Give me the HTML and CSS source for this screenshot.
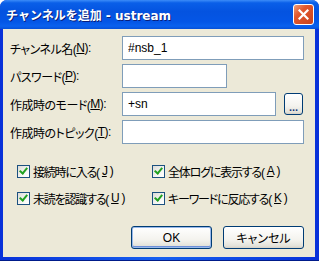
FILE: index.html
```html
<!DOCTYPE html>
<html lang="ja">
<head>
    <meta charset="UTF-8" />
    <title>チャンネルを追加 - ustream</title>
    <link rel="stylesheet" href="styles.css">
</head>
<body>
    <div class="window">
        <div class="titlebar">
            <span class="title">チャンネルを追加 - ustream</span>
            <button class="close" aria-label="閉じる">
                <svg width="11" height="11" viewBox="0 0 11 11">
                    <path d="M1.5 1.5 L9.5 9.5 M9.5 1.5 L1.5 9.5" stroke="#fff" stroke-width="2.2" stroke-linecap="square" />
                </svg>
            </button>
        </div>

        <main class="content">
            <div class="form">
                <label class="label">チャンネル名(<u>N</u>):</label>
                <div class="field"><input class="textbox" type="text" value="#nsb_1" /></div>

                <label class="label">パスワード(<u>P</u>):</label>
                <div class="field"><input class="textbox short" type="text" value="" /></div>

                <label class="label">作成時のモード(<u>M</u>):</label>
                <div class="field">
                    <input class="textbox" type="text" value="+sn" />
                    <button class="btn more">...</button>
                </div>

                <label class="label">作成時のトピック(<u>T</u>):</label>
                <div class="field"><input class="textbox" type="text" value="" /></div>
            </div>

            <div class="checks">
                <label class="check"><span class="box"></span>接続時に入る(<u>J</u>)</label>
                <label class="check"><span class="box"></span>全体ログに表示する(<u>A</u>)</label>
                <label class="check"><span class="box"></span>未読を認識する(<u>U</u>)</label>
                <label class="check"><span class="box"></span>キーワードに反応する(<u>K</u>)</label>
            </div>

            <div class="actions">
                <button class="btn default">OK</button>
                <button class="btn">キャンセル</button>
            </div>
        </main>
    </div>
</body>
</html>
```

FILE: styles.css
```css
body {
    margin: 0;
    padding: 0;
    background-color: #ffffff;
    font-family: "Liberation Sans", "Noto Sans CJK JP", sans-serif;
    font-size: 12px;
    font-feature-settings: "palt";
}

.window {
    width: 319px;
    height: 261px;
    box-sizing: border-box;
    padding: 0 4px 4px 3px;
    display: flex;
    flex-direction: column;
    border-radius: 7px 7px 0 0;
    background: linear-gradient(to right, #0831d9 0%, #1660f0 50%, #0831d9 100%);
    box-shadow: inset 0 -1px 0 #001b8a;
}

.titlebar {
    height: 29px;
    margin: 0 -4px 0 -3px;
    padding: 0 6px 0 6px;
    display: flex;
    align-items: center;
    justify-content: space-between;
    border-radius: 7px 7px 0 0;
    background: linear-gradient(to bottom,
        #3c8cf8 0%, #0a5fe8 10%, #0453e0 40%, #0456e6 75%, #0a61ee 90%, #0650d8 100%);
}

.title {
    color: #ffffff;
    font-family: "DejaVu Sans", "Noto Sans CJK JP", sans-serif;
    font-weight: bold;
    font-size: 12px;
    font-feature-settings: normal;
    text-shadow: 1px 1px 0 #0a1e7a;
    margin-top: -1px;
}

.close {
    width: 21px;
    height: 21px;
    padding: 0;
    margin-right: -1px;
    margin-top: -1px;
    border: 1px solid #ffffff;
    border-radius: 3px;
    background: linear-gradient(135deg, #f0a07a 0%, #e2582e 35%, #c9421c 100%);
    display: flex;
    align-items: center;
    justify-content: center;
}

.content {
    flex: 1;
    background-color: #ece9d8;
    padding: 7px 11px 0 7px;
}

.form {
    display: grid;
    grid-template-columns: 112px minmax(0, 1fr);
    grid-auto-rows: 24px;
    row-gap: 4px;
}

.label {
    display: flex;
    align-items: center;
    color: #000000;
    white-space: nowrap;
    letter-spacing: -0.5px;
}

.field {
    display: flex;
    align-items: center;
    gap: 8px;
    min-width: 0;
}

.textbox {
    flex: 1;
    height: 24px;
    box-sizing: border-box;
    width: 0;
    min-width: 0;
    margin: 0;
    padding: 0 5px;
    border: 1px solid #7f9db9;
    background-color: #ffffff;
    font-family: "Liberation Sans", "Noto Sans CJK JP", sans-serif;
    font-size: 12px;
    color: #000000;
}

.textbox.short {
    flex: none;
    width: 105px;
}

.btn {
    box-sizing: border-box;
    padding: 0;
    border: 1px solid #003c74;
    border-radius: 3px;
    background: linear-gradient(to bottom, #ffffff 0%, #f4f3ee 60%, #e3e2da 90%, #d6d0c5 100%);
    font-family: "Liberation Sans", "Noto Sans CJK JP", sans-serif;
    font-size: 12px;
    font-feature-settings: "palt";
    color: #000000;
}

.more {
    flex: none;
    width: 19px;
    height: 22px;
    margin-right: 1px;
    padding-top: 5px;
    line-height: 12px;
    font-weight: bold;
    font-size: 11px;
    color: #1a3a7a;
}

.checks {
    margin-top: 17px;
    padding-left: 7px;
    display: grid;
    grid-template-columns: 135px 1fr;
    grid-auto-rows: 20px;
    row-gap: 7px;
}

.check {
    display: flex;
    align-items: center;
    gap: 3px;
    white-space: nowrap;
    color: #000000;
    letter-spacing: -1.2px;
}

.box {
    flex: none;
    width: 13px;
    height: 13px;
    box-sizing: border-box;
    border: 1px solid #1c5180;
    background: linear-gradient(135deg, #dcdcd6 0%, #f6f6f4 60%, #ffffff 100%);
    position: relative;
}

.box::after {
    content: "";
    position: absolute;
    left: 3px;
    top: 0px;
    width: 3px;
    height: 6px;
    border-right: 2px solid #21a121;
    border-bottom: 2px solid #21a121;
    transform: rotate(40deg);
}

.actions {
    margin-top: 18px;
    display: flex;
    justify-content: flex-end;
    gap: 11px;
}

.actions .btn {
    width: 81px;
    height: 23px;
}

.btn.default {
    box-shadow: inset 0 0 0 1px #98b8ea, inset 0 -1px 0 1px #6d8fd8;
}
```
